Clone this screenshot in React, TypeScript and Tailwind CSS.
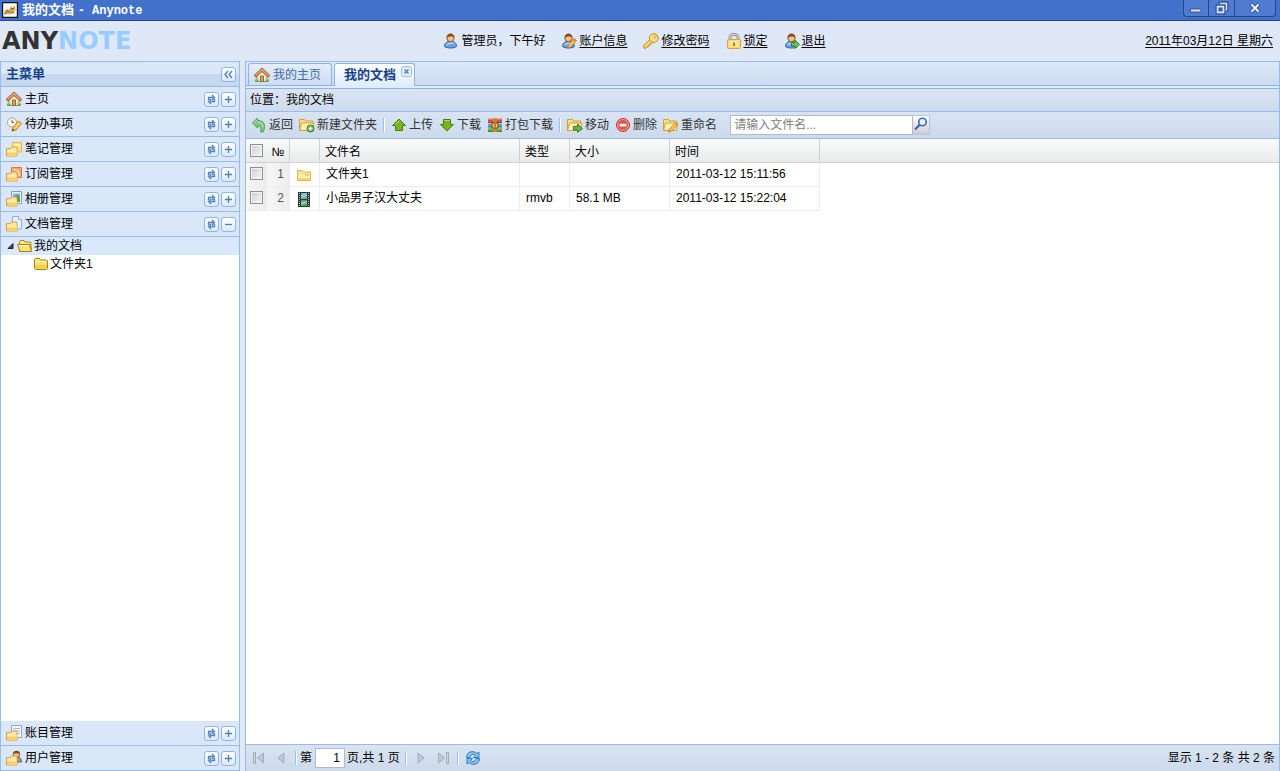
import type { ReactNode } from "react";

function Icon({ children }: { children: ReactNode }) {
  return (
    <svg width="16" height="16" viewBox="0 0 16 16" className="shrink-0" aria-hidden="true">
      {children}
    </svg>
  );
}

/* ---------- shared shapes ---------- */

// folder in the lower left corner, something else peeks out behind it
function SmallFolder() {
  return (
    <>
      <path d="M.5 7.500h4l1-1.500h5.500v9H.5z" fill="#fbe3a0" stroke="#d8a24a" />
      <path d="M1 9h9.500v5.500H1z" fill="#ffedb0" />
      <path d="M1 11.500h9.500v3H1z" fill="#fccf5c" />
    </>
  );
}

function PersonShape() {
  return (
    <>
      <path d="M1.500 13.500c0-3.500 2-5 6-5s6 1.500 6 5c-2 2-10 2-12 0z" fill="#6d9fe4" stroke="#2f62b5" />
      <path d="M4 12c1-2 5-2.500 7-1" stroke="#b9d5fa" strokeWidth="1.500" fill="none" />
      <circle cx="7.500" cy="5" r="3.700" fill="#f3c08c" stroke="#95582a" />
      <path d="M3.500 5c0-6 8-6 8 0-1-2-6-2-8 0z" fill="#8a4b22" />
    </>
  );
}

/* ---------- icons ---------- */

const HomeIcon = () => (
  <Icon>
    <path d="M3 8v6.500h10V8L8 3.500z" fill="#f7ebcc" stroke="#a98b56" />
    <path d="M6.500 9h3v5.500h-3z" fill="#d9a566" stroke="#8a6a3a" />
    <path d="M.8 9.500L8 2.800l7.200 6.700" fill="none" stroke="#9c5a34" strokeWidth="3.200" />
    <path d="M1.200 9L8 2.700 14.800 9" fill="none" stroke="#eba877" strokeWidth="1.600" />
    <path d="M1 12.500h3.500V15H1zM11.500 12.500H15V15h-3.500z" fill="#74ad4c" />
  </Icon>
);

const TodoIcon = () => (
  <Icon>
    <circle cx="6" cy="6.500" r="4.500" fill="#fffbea" stroke="#a8a08a" />
    <path d="M6 4v2.500h2" stroke="#555" fill="none" />
    <path d="M6 15l1-3.500 5.500-6.500 3 2.500-5.500 6.500z" fill="#f9cf66" stroke="#bd7d25" />
    <path d="M6 15l.6-2.400 1.700 1.500z" fill="#4d3c20" />
  </Icon>
);

const NoteFolderIcon = () => (
  <Icon>
    <path d="M6.500 1.500h9v9.500h-9z" fill="#ffe27a" stroke="#e6b958" />
    <path d="M8 3h6v2H8z" fill="#fff5c5" />
    <SmallFolder />
  </Icon>
);

const FeedFolderIcon = () => (
  <Icon>
    <path d="M5.500 1.500h10v10h-10z" fill="#f6a76a" stroke="#e0763a" />
    <path d="M7 3.500c4 0 6.500 2 6.500 6.500M7 6.500c2.500 0 3.500 1 3.500 3.500" stroke="#fff0df" fill="none" strokeWidth="1.200" />
    <SmallFolder />
  </Icon>
);

const AlbumFolderIcon = () => (
  <Icon>
    <path d="M5.500.5h10v12h-10z" fill="#eef5fd" stroke="#7d9cc7" />
    <path d="M7 2.500h7v5H7z" fill="#7db0e8" />
    <path d="M8 7c1-4 5-4 6 0v4H8z" fill="#5b9a48" />
    <SmallFolder />
  </Icon>
);

const DocFolderIcon = () => (
  <Icon>
    <path d="M6.500.5h6l3 3v9.500h-9z" fill="#e6f1fe" stroke="#8cb0de" />
    <path d="M12.500.5v3h3" fill="#fff" stroke="#8cb0de" />
    <SmallFolder />
  </Icon>
);

const AccountFolderIcon = () => (
  <Icon>
    <path d="M5.500.5h10v12h-10z" fill="#f5f9ff" stroke="#8aa8d0" />
    <path d="M7 3.500h7M7 6h7M7 8.500h7" stroke="#9cb9dd" />
    <path d="M9.500 2.500v8" stroke="#c5d6ec" />
    <SmallFolder />
  </Icon>
);

const UserFolderIcon = () => (
  <Icon>
    <path d="M5 11c0-3.500 2-4.500 5-4.500s5.500 1.500 5.500 5.500H5z" fill="#a0978d" stroke="#6c5f52" />
    <circle cx="10.500" cy="4.500" r="3.200" fill="#edb78c" stroke="#95582a" />
    <path d="M7 4c0-4.500 7-4.500 7 0-1-1-6-1-7 0z" fill="#7d4a29" />
    <SmallFolder />
  </Icon>
);

const UserIcon = () => (
  <Icon>
    <PersonShape />
  </Icon>
);

const UserEditIcon = () => (
  <Icon>
    <PersonShape />
    <path d="M6.500 15l1-3.500 5.500-6 2.500 2-6 6.500z" fill="#f9c860" stroke="#c07d22" />
    <path d="M12 6.500l2.500 2" stroke="#e2786a" strokeWidth="1.500" />
  </Icon>
);

const UserGoIcon = () => (
  <Icon>
    <PersonShape />
    <path d="M7.500 9.500h3.500V7l4.500 4.500L11 15.500V13H7.500z" fill="#6fc04c" stroke="#33802a" />
  </Icon>
);

const KeyIcon = () => (
  <Icon>
    <path d="M.8 12.500L7 6.300l3 3-1.500 1.500H7v1.500H5.500v1.500H4L3 15.200H.8z" fill="#fbd565" stroke="#c58d25" />
    <circle cx="10.800" cy="5" r="4.400" fill="#fce08a" stroke="#c58d25" />
    <circle cx="12" cy="4" r="1.200" fill="#fff" stroke="#c58d25" strokeWidth=".8" />
  </Icon>
);

const LockIcon = () => (
  <Icon>
    <path d="M4 8V5c0-5 8-5 8 0v3" fill="none" stroke="#8f9299" strokeWidth="3" />
    <path d="M4 7V5c0-5 8-5 8 0v2" fill="none" stroke="#d9dbe0" strokeWidth="1.200" />
    <rect x="1.500" y="6.500" width="13" height="9" rx="1" fill="#fbd978" stroke="#d9a33c" />
    <path d="M3.500 8.500h9M3.500 10.500h9M3.500 12.500h9" stroke="#fff3c4" />
    <path d="M7 9.500h2v3.500H7z" fill="#b97f1d" />
  </Icon>
);

const BackIcon = () => (
  <Icon>
    <path
      d="M1.500 6l5-5v2.500c5 0 7 2.500 7 6 0 2-.5 4-1.500 5.500H9.500c1-4 .5-6-3-6v2z"
      fill="#84c684"
      stroke="#4f9c5a"
    />
    <path d="M3 6l3-3M7 5c3 0 5 2 5 5" stroke="#c3e8c0" fill="none" />
  </Icon>
);

function OpenFolder() {
  return (
    <>
      <path d="M.5 13.500v-11h5l1 1.500h7v3" fill="#f7e08c" stroke="#cfa13b" />
      <path d="M.5 13.500l2-7.500h12l-1 7.500z" fill="#fdefb1" stroke="#cfa13b" />
    </>
  );
}

const FolderAddIcon = () => (
  <Icon>
    <OpenFolder />
    <circle cx="11.500" cy="11.500" r="3.500" fill="#6bb545" stroke="#3b7f2c" />
    <path d="M11.500 9.500v4M9.500 11.500h4" stroke="#fff" strokeWidth="1.300" />
  </Icon>
);

const FolderGoIcon = () => (
  <Icon>
    <OpenFolder />
    <path d="M6.500 9.500h4V7l5 4.500-5 4V13h-4z" fill="#6bb545" stroke="#3b7f2c" />
  </Icon>
);

const FolderEditIcon = () => (
  <Icon>
    <OpenFolder />
    <path d="M5.500 15l1-3 6-6 2 2-6 6z" fill="#f9c860" stroke="#c07d22" />
  </Icon>
);

const UploadIcon = () => (
  <Icon>
    <path d="M8 2l6.500 6.500h-3v5h-7v-5h-3z" fill="#77b31c" stroke="#4b7c10" strokeLinejoin="round" />
    <path d="M8 4L4.500 7.500" stroke="#b8dd6c" />
  </Icon>
);

const DownloadIcon = () => (
  <Icon>
    <path d="M8 14L1.500 7.500h3v-5h7v5h3z" fill="#77b31c" stroke="#4b7c10" strokeLinejoin="round" />
    <path d="M5.500 3.500h5" stroke="#b8dd6c" />
  </Icon>
);

const ArchiveIcon = () => (
  <Icon>
    <path d="M1 1.500h14V6H1z" fill="#dc4b3c" />
    <path d="M1 6h14v4.500H1z" fill="#5d9fe0" />
    <path d="M1 10.500h14V15H1z" fill="#5fae3f" />
    <path d="M1 2h14M1 6.500h14M1 11h14" stroke="#fff" strokeOpacity=".5" />
    <path d="M1 5.500h14M1 10h14M1 14.500h14" stroke="#334" strokeOpacity=".45" />
    <path d="M6 1.500h4V15H6z" fill="#c98037" />
    <path d="M5 6h6v5H5z" fill="#f6c355" stroke="#7d4c17" />
    <path d="M8 7v3" stroke="#7d4c17" />
  </Icon>
);

const DeleteIcon = () => (
  <Icon>
    <circle cx="8" cy="8" r="6.500" fill="#e2564e" stroke="#c03932" />
    <circle cx="8" cy="8" r="5.500" fill="none" stroke="#f39a92" />
    <path d="M4.500 6.800h7v2.600h-7z" fill="#fff" />
  </Icon>
);

const FolderIcon = () => (
  <Icon>
    <path d="M1.500 13.500v-10H6L7.500 5h7v8.500z" fill="#fbe293" stroke="#dfb354" />
    <path d="M2 8h12v5H2z" fill="#fff0b8" />
    <path d="M9 7.500h4v1H9z" fill="#e0b14a" />
    <path d="M2 11h12v2H2z" fill="#fbd468" />
  </Icon>
);

const TreeFolderIcon = () => (
  <Icon>
    <path d="M1.500 12.500v-9l1-1h4l1 1.500h6l1 1v7.500l-1 1h-11z" fill="#fbe36f" stroke="#a8811b" />
    <path d="M2.500 5.500h11" stroke="#fff7c4" />
    <path d="M2 9h12v3.500H2z" fill="#f3cf4b" />
  </Icon>
);

const TreeFolderOpenIcon = () => (
  <Icon>
    <path d="M2.500 13.500v-10l1-1h3.500l1 1.500h5l1 1v8.500z" fill="#fbe98a" stroke="#a8811b" />
    <path d="M3 13.500L.5 6.500h12l2 7z" fill="#fbe36f" stroke="#a8811b" />
    <path d="M2 7.500h10" stroke="#fff7c4" />
  </Icon>
);

const VideoIcon = () => (
  <Icon>
    <path d="M2 1h12v15H2z" fill="#2c3a33" />
    <path d="M5 2h6v6H5z" fill="#6fb3a0" />
    <path d="M5 9h6v6H5z" fill="#5aa04d" />
    <path d="M5 4l6-2v3L5 7zM5 11l6-1v2l-6 2z" fill="#8fc6e2" />
    <path d="M3.500 2v13M12.500 2v13" stroke="#a9c4a8" strokeDasharray="1 1" />
  </Icon>
);

const RefreshIcon = () => (
  <Icon>
    <path d="M1.500 7.500c0-6 7-7.500 10.500-4l2-1.500v5.500H8.500l2-2c-2-2-5-1-5.500 2z" fill="#7fc0f0" stroke="#2b73b8" strokeWidth=".9" />
    <path d="M14.500 8.500c0 6-7 7.500-10.500 4L2 14V8.500h5.500l-2 2c2 2 5 1 5.500-2z" fill="#7fc0f0" stroke="#2b73b8" strokeWidth=".9" />
  </Icon>
);

const PageArrow = ({ flip = false, bar = false }) => (
  <Icon>
    <g transform={flip ? "translate(16 0) scale(-1 1)" : undefined}>
      <path d={bar ? "M12.500 3v10L6.500 8z" : "M11 3v10L5 8z"} fill="#c3c9d1" stroke="#a3abb7" />
      {bar && <path d="M2.500 2.500h2v11h-2z" fill="#d3d8df" stroke="#a3abb7" />}
    </g>
  </Icon>
);

/* ---------- side menu ---------- */

const toolPaths = {
  collapse: "M7 4L4 7.500 7 11M11 4L8 7.500 11 11",
  reload: "M4.500 8V5.500h4.500M8 3l2.500 2.500L8 8M10.500 7v2.500H6M7 7L4.500 9.500 7 12",
  plus: "M7.500 4v7M4 7.500h7",
  minus: "M4 7.500h7",
};

function ToolButton({ kind, label }: { kind: keyof typeof toolPaths; label: string }) {
  return (
    <button
      type="button"
      aria-label={label}
      className="flex size-[15px] items-center justify-center rounded-[3px] border border-[#8fb4e6] bg-linear-to-b from-white to-[#dbe9fb]"
    >
      <svg width="15" height="15" viewBox="0 0 15 15" className="shrink-0" aria-hidden="true">
        <path d={toolPaths[kind]} fill="none" stroke="#4f7fb8" strokeWidth="1.300" />
      </svg>
    </button>
  );
}

type MenuEntry = { label: string; icon: ReactNode; open?: boolean };

const topMenu: MenuEntry[] = [
  { label: "主页", icon: <HomeIcon /> },
  { label: "待办事项", icon: <TodoIcon /> },
  { label: "笔记管理", icon: <NoteFolderIcon /> },
  { label: "订阅管理", icon: <FeedFolderIcon /> },
  { label: "相册管理", icon: <AlbumFolderIcon /> },
  { label: "文档管理", icon: <DocFolderIcon />, open: true },
];

const bottomMenu: MenuEntry[] = [
  { label: "账目管理", icon: <AccountFolderIcon /> },
  { label: "用户管理", icon: <UserFolderIcon /> },
];

function MenuRow({ label, icon, open }: MenuEntry) {
  return (
    <div className="flex h-[25px] items-center gap-0.5 border-b border-[#99bbe8] bg-[#d9e7f8] pr-[3px] pl-[5px]">
      <button type="button" className="flex flex-1 items-center gap-[3px] text-left">
        {icon}
        {label}
      </button>
      <ToolButton kind="reload" label="刷新" />
      <ToolButton kind={open ? "minus" : "plus"} label={open ? "收起" : "展开"} />
    </div>
  );
}

function Sidebar() {
  return (
    <aside className="flex w-60 shrink-0 flex-col border-x border-t border-[#99bbe8] bg-white">
      <div className="flex h-[25px] items-center justify-between border-b border-[#99bbe8] bg-linear-to-b from-[#dae7f7] from-50% to-[#c7d8ee] to-50% pr-[3px] pl-[5px]">
        <h2 className="text-[13px] font-bold text-[#15428b]">主菜单</h2>
        <ToolButton kind="collapse" label="折叠" />
      </div>
      {topMenu.map((entry) => (
        <MenuRow key={entry.label} {...entry} />
      ))}
      <ul className="flex-1">
        <li>
          <div className="flex h-[18px] items-center bg-[#d9e8fb] pl-1">
            <svg width="12" height="12" viewBox="0 0 12 12" aria-hidden="true">
              <path d="M8 3.500v5H3z" fill="#444" stroke="#222" />
            </svg>
            <a href="#docs" className="flex items-center gap-px">
              <TreeFolderOpenIcon />
              我的文档
            </a>
          </div>
          <ul>
            <li className="flex h-[18px] items-center pl-8">
              <a href="#folder1" className="flex items-center gap-px">
                <TreeFolderIcon />
                文件夹1
              </a>
            </li>
          </ul>
        </li>
      </ul>
      {bottomMenu.map((entry) => (
        <MenuRow key={entry.label} {...entry} />
      ))}
    </aside>
  );
}

/* ---------- header ---------- */

const links = [
  { label: "账户信息", icon: <UserEditIcon /> },
  { label: "修改密码", icon: <KeyIcon /> },
  { label: "锁定", icon: <LockIcon /> },
  { label: "退出", icon: <UserGoIcon /> },
];

function TitleBar() {
  return (
    <div className="flex h-[21px] items-start border-b border-[#27468c] bg-[#4271cb] pr-1 pl-0.5">
      <svg width="16" height="16" viewBox="0 0 16 16" className="mt-0.5" aria-hidden="true">
        <path d="M.5.5h15v15H.5z" fill="#fff" stroke="#111" strokeWidth="1.400" />
        <path d="M2 13l1-5 2-1 2 1 2-4 1.500 2L13 3.500l.5 4-1.500 3-2 .5-2 1.500-3-.5z" fill="#d9a55a" />
        <path d="M2.500 12l3-3 2 1M9 7l3-1M9 10.500l3 .5" stroke="#6b4318" fill="none" strokeWidth=".8" />
      </svg>
      <h1 className="ml-1 flex-1 text-[13px] leading-5 font-bold text-white">
        我的文档 <span className="font-['Liberation_Mono'] text-xs">- Anynote</span>
      </h1>
      <div className="flex h-[17px] divide-x divide-[#27468c] rounded-b-[4px] border border-t-0 border-[#27468c] bg-[#4f7cd0]">
        <button type="button" aria-label="最小化" className="flex w-[25px] items-center justify-center">
          <Icon>
            <path d="M2.500 9h10.500v3H2.500z" fill="#dbe5f7" stroke="#2b3f70" strokeWidth=".8" />
          </Icon>
        </button>
        <button type="button" aria-label="还原" className="flex w-[26px] items-center justify-center">
          <Icon>
            <path d="M6 3.500h6.500V10h-2" fill="none" stroke="#dbe5f7" strokeWidth="1.500" />
            <path d="M3.500 6.500h6v6h-6z" fill="#3a5fae" stroke="#dbe5f7" strokeWidth="1.800" />
            <path d="M5 4.500V2h9v9h-2.500M2 5h9v9H2z" fill="none" stroke="#2b3f70" strokeWidth=".8" />
          </Icon>
        </button>
        <button type="button" aria-label="关闭" className="flex w-10 items-center justify-center">
          <Icon>
            <path d="M4 4l8 8M12 4l-8 8" stroke="#2b3f70" strokeWidth="3.600" />
            <path d="M4.300 4.300l7.400 7.400M11.700 4.300l-7.400 7.400" stroke="#e6edfa" strokeWidth="2.200" />
          </Icon>
        </button>
      </div>
    </div>
  );
}

function Header() {
  return (
    <header className="grid h-10 shrink-0 grid-cols-[1fr_auto_1fr] items-center bg-[#dfe8f6] pr-[7px] pl-0.5">
      <div className="font-['DejaVu_Sans'] text-2xl leading-none font-bold text-[#333]">
        ANY<span className="text-[#99ccff]">NOTE</span>
      </div>
      <nav className="flex items-center gap-4 pr-1.5">
        <span className="flex items-center gap-0.5">
          <UserIcon />
          管理员，下午好
        </span>
        {links.map(({ label, icon }) => (
          <a key={label} href="#account" className="flex items-center gap-0.5">
            {icon}
            <span className="underline underline-offset-2">{label}</span>
          </a>
        ))}
      </nav>
      <a href="#date" className="justify-self-end underline underline-offset-2">
        2011年03月12日 星期六
      </a>
    </header>
  );
}

/* ---------- documents panel ---------- */

function Separator() {
  return <span className="mx-[3px] h-3.5 w-0.5 border-r border-l border-r-white border-l-[#98c0f4]" />;
}

function BarButton({ icon, children }: { icon: ReactNode; children: ReactNode }) {
  return (
    <button type="button" className="flex items-center gap-0.5 px-[3px] whitespace-nowrap text-[#333]">
      {icon}
      {children}
    </button>
  );
}

function Tabs() {
  return (
    <div className="border-b border-[#8db2e3] bg-[#deecfd] pb-0.5">
      <div className="flex h-6 items-end gap-0.5 border-b border-[#8db2e3] bg-linear-to-b from-[#dde8f7] to-[#cbdbf0] pl-0.5">
        <button
          type="button"
          className="flex h-[22px] w-[84px] items-center gap-[3px] rounded-t-[3px] border border-b-0 border-[#8db2e3] bg-linear-to-b from-[#e4eefb] to-[#cdddf3] pl-[5px] text-[#416da3]"
        >
          <HomeIcon />
          我的主页
        </button>
        <div className="-mb-px flex h-[23px] items-start rounded-t-[3px] border border-b-0 border-[#8db2e3] bg-linear-to-b from-white to-[#deecfd] pr-0.5 pl-[9px]">
          <button type="button" className="h-[22px] text-[13px] font-bold text-[#15428b]">
            我的文档
          </button>
          <button type="button" aria-label="关闭标签" className="mt-0.5 ml-[5px]">
            <svg width="11" height="11" viewBox="0 0 11 11" aria-hidden="true">
              <rect x=".5" y=".5" width="10" height="10" rx="2" fill="#e3eefb" stroke="#9dbde8" />
              <path d="M3.500 3.500l4 4M7.500 3.500l-4 4" stroke="#5c7fb3" strokeWidth="1.500" />
            </svg>
          </button>
        </div>
      </div>
    </div>
  );
}

function Toolbar() {
  return (
    <div className="flex h-[27px] items-center border-b border-[#99bbe8] bg-linear-to-b from-[#d9e4f2] to-[#ccdaec] pl-0.5">
      <BarButton icon={<BackIcon />}>返回</BarButton>
      <BarButton icon={<FolderAddIcon />}>新建文件夹</BarButton>
      <Separator />
      <BarButton icon={<UploadIcon />}>上传</BarButton>
      <BarButton icon={<DownloadIcon />}>下载</BarButton>
      <BarButton icon={<ArchiveIcon />}>打包下载</BarButton>
      <Separator />
      <BarButton icon={<FolderGoIcon />}>移动</BarButton>
      <BarButton icon={<DeleteIcon />}>删除</BarButton>
      <BarButton icon={<FolderEditIcon />}>重命名</BarButton>
      <form className="ml-2.5 flex">
        <input
          type="text"
          aria-label="文件名"
          placeholder="请输入文件名..."
          className="h-5 w-[183px] border border-[#b5b8c8] bg-white px-[3px] placeholder:text-[#808080]"
        />
        <button
          type="button"
          aria-label="搜索"
          className="flex h-5 w-[17px] items-start justify-center border border-l-0 border-[#b5c7e0] bg-linear-to-b from-white to-[#c9ccd2]"
        >
          <Icon>
            <path d="M2 13.500l5-5" stroke="#3c62a8" strokeWidth="2.200" />
            <circle cx="9.500" cy="6" r="3.800" fill="#e6f1fd" stroke="#3f69b5" strokeWidth="1.600" />
          </Icon>
        </button>
      </form>
    </div>
  );
}

const files = [
  { name: "文件夹1", icon: <FolderIcon />, type: "", size: "", time: "2011-03-12 15:11:56" },
  { name: "小品男子汉大丈夫", icon: <VideoIcon />, type: "rmvb", size: "58.1 MB", time: "2011-03-12 15:22:04" },
];

const th = "border-r border-b border-[#d0d0d0] px-[5px] pt-0.5 pb-0 text-left font-normal";
const td = "border-r border-b border-[#ededed] px-1.5 pb-0.5";
const side = "border-b border-[#ededed] bg-linear-to-r from-[#f7f7f7] to-[#ececec]";

function CheckBox({ label }: { label: string }) {
  return (
    <input
      type="checkbox"
      aria-label={label}
      className="ml-1 block size-[13px] appearance-none border border-[#8e8f8f] bg-linear-to-br from-[#cbcfd5] to-[#f6f6f6] shadow-[inset_0_0_0_1px_#f4f4f4]"
    />
  );
}

function FileTable() {
  return (
    <table className="w-full table-fixed border-separate border-spacing-0">
      <colgroup>
        <col className="w-[21px]" />
        <col className="w-[23px]" />
        <col className="w-[30px]" />
        <col className="w-[200px]" />
        <col className="w-[50px]" />
        <col className="w-[100px]" />
        <col className="w-[150px]" />
        <col />
      </colgroup>
      <thead>
        <tr className="h-6 bg-linear-to-b from-[#fafafa] to-[#e9eaec]">
          <th className="border-b border-[#d0d0d0] p-0">
            <CheckBox label="全选" />
          </th>
          <th className="border-r border-b border-[#d0d0d0] p-0 pt-0.5 font-normal">№</th>
          <th className={th} />
          <th className={th}>文件名</th>
          <th className={th}>类型</th>
          <th className={th}>大小</th>
          <th className={th}>时间</th>
          <th className="border-b border-[#d0d0d0]" />
        </tr>
      </thead>
      <tbody>
        {files.map((file, i) => (
          <tr key={file.name} className="h-6">
            <td className={`${side} p-0 pb-0.5`}>
              <CheckBox label={file.name} />
            </td>
            <td className={`${side} border-r p-0 pr-[5px] pb-0.5 text-right text-[#555]`}>{i + 1}</td>
            <td className="border-r border-b border-[#ededed] p-0 pl-1.5">{file.icon}</td>
            <td className={td}>{file.name}</td>
            <td className={td}>{file.type}</td>
            <td className={td}>{file.size}</td>
            <td className={td}>{file.time}</td>
            <td />
          </tr>
        ))}
      </tbody>
    </table>
  );
}

function PageButton({ label, children }: { label: string; children: ReactNode }) {
  return (
    <button type="button" aria-label={label} className="px-[3px]">
      {children}
    </button>
  );
}

function PagingBar() {
  return (
    <div className="flex h-[27px] items-center border-t border-[#99bbe8] bg-linear-to-b from-[#d9e4f2] to-[#ccdaec] pr-1 pl-0.5">
      <PageButton label="第一页">
        <PageArrow bar />
      </PageButton>
      <PageButton label="上一页">
        <PageArrow />
      </PageButton>
      <Separator />
      <label className="flex items-center gap-[3px]">
        第
        <input
          type="text"
          defaultValue="1"
          className="h-5 w-[30px] border border-[#b5b8c8] bg-white px-1 text-right"
        />
      </label>
      <span className="mx-0.5">页,共 1 页</span>
      <Separator />
      <PageButton label="下一页">
        <PageArrow flip />
      </PageButton>
      <PageButton label="最后一页">
        <PageArrow flip bar />
      </PageButton>
      <Separator />
      <PageButton label="刷新">
        <RefreshIcon />
      </PageButton>
      <span className="ml-auto">显示 1 - 2 条 共 2 条</span>
    </div>
  );
}

export default function App() {
  return (
    <div className="flex h-screen flex-col bg-[#dfe8f6] font-['Liberation_Sans','Noto_Sans_CJK_SC',sans-serif] text-xs text-black">
      <TitleBar />
      <Header />
      <div className="flex min-h-0 flex-1 gap-[5px]">
        <Sidebar />
        <main className="flex min-w-0 flex-1 flex-col border-x border-t border-[#99bbe8] bg-white">
          <Tabs />
          <div className="flex h-[23px] items-center border-b border-[#99bbe8] bg-linear-to-b from-[#dae5f3] to-[#cddbed] pl-1">
            位置：我的文档
          </div>
          <Toolbar />
          <div className="flex-1">
            <FileTable />
          </div>
          <PagingBar />
        </main>
      </div>
    </div>
  );
}
